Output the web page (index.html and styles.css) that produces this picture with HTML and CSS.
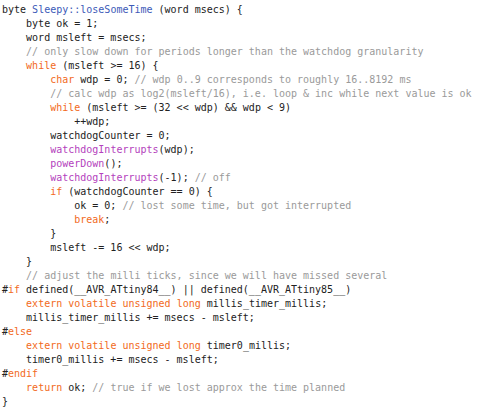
FILE: index.html
```html
<!DOCTYPE html>
<html>
<head>
<meta charset="utf-8">
<link rel="stylesheet" href="styles.css">
</head>
<body>
<pre class="code">byte <span class="fn">Sleepy::loseSomeTime</span> (word msecs) {
    byte ok = 1;
    word msleft = msecs;
    <span class="cm">// only slow down for periods longer than the watchdog granularity</span>
    <span class="kw">while</span> (msleft &gt;= 16) {
        <span class="kw">char</span> wdp = 0; <span class="cm">// wdp 0..9 corresponds to roughly 16..8192 ms</span>
        <span class="cm">// calc wdp as log2(msleft/16), i.e. loop &amp; inc while next value is ok</span>
        <span class="kw">while</span> (msleft &gt;= (32 &lt;&lt; wdp) &amp;&amp; wdp &lt; 9)
            ++wdp;
        watchdogCounter = 0;
        <span class="call">watchdogInterrupts</span>(wdp);
        <span class="call">powerDown</span>();
        <span class="call">watchdogInterrupts</span>(-1); <span class="cm">// off</span>
        <span class="kw">if</span> (watchdogCounter == 0) {
            ok = 0; <span class="cm">// lost some time, but got interrupted</span>
            <span class="kw">break</span>;
        }
        msleft -= 16 &lt;&lt; wdp;
    }
    <span class="cm">// adjust the milli ticks, since we will have missed several</span>
#<span class="kw">if</span> defined(__AVR_ATtiny84__) || defined(__AVR_ATtiny85__)
    <span class="kw">extern</span> <span class="kw">volatile</span> <span class="kw">unsigned</span> <span class="kw">long</span> millis_timer_millis;
    millis_timer_millis += msecs - msleft;
#<span class="kw">else</span>
    <span class="kw">extern</span> <span class="kw">volatile</span> <span class="kw">unsigned</span> <span class="kw">long</span> timer0_millis;
    timer0_millis += msecs - msleft;
#<span class="kw">endif</span>
    <span class="kw">return</span> ok; <span class="cm">// true if we lost approx the time planned</span>
}</pre>
</body>
</html>
```
FILE: styles.css
```css
html, body {
  margin: 0;
  padding: 0;
  background: #ffffff;
}
.code {
  margin: 0;
  padding: 3px 0 0 2px;
  font-family: "DejaVu Sans Mono", monospace;
  font-size: 10px;
  line-height: 14px;
  color: #222222;
}
.fn { color: #3c5ab8; }
.kw { color: #f26a22; }
.call { color: #b43fbd; }
.cm { color: #9a9a9a; }
```
